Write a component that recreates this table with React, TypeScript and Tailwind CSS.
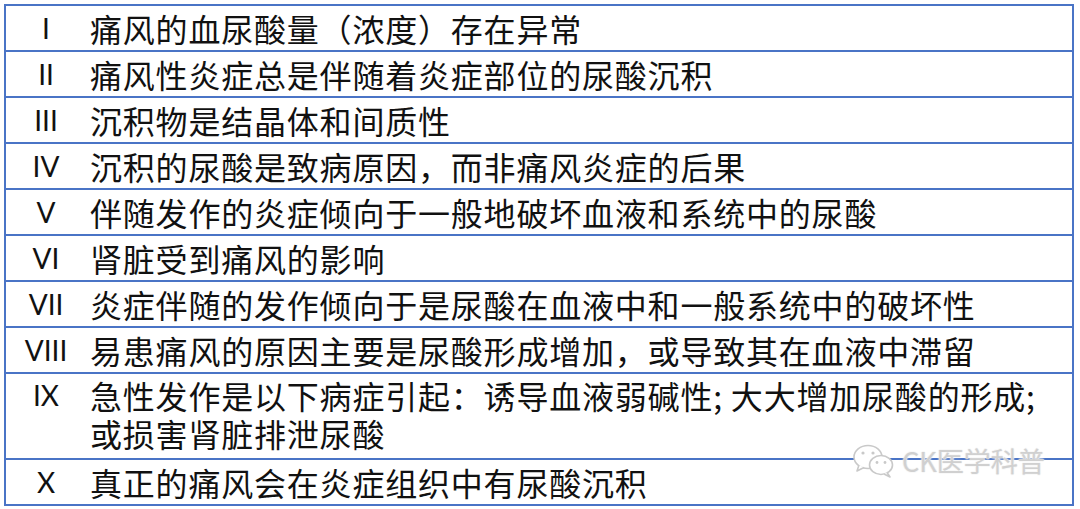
import React from "react";

const rows: { n: string; t: React.ReactNode; h: string }[] = [
  { n: "I", t: "痛风的血尿酸量（浓度）存在异常", h: "h-[44px] items-center" },
  { n: "II", t: "痛风性炎症总是伴随着炎症部位的尿酸沉积", h: "h-[46px] items-center border-t-2" },
  { n: "III", t: "沉积物是结晶体和间质性", h: "h-[46px] items-center border-t-2" },
  { n: "IV", t: "沉积的尿酸是致病原因，而非痛风炎症的后果", h: "h-[46px] items-center border-t-2" },
  { n: "V", t: "伴随发作的炎症倾向于一般地破坏血液和系统中的尿酸", h: "h-[46px] items-center border-t-2" },
  { n: "VI", t: "肾脏受到痛风的影响", h: "h-[46px] items-center border-t-2" },
  { n: "VII", t: "炎症伴随的发作倾向于是尿酸在血液中和一般系统中的破坏性", h: "h-[46px] items-center border-t-2" },
  { n: "VIII", t: "易患痛风的原因主要是尿酸形成增加，或导致其在血液中滞留", h: "h-[46px] items-center border-t-2" },
  {
    n: "IX",
    t: (
      <>
        急性发作是以下病症引起：诱导血液弱碱性; 大大增加尿酸的形成;
        <br />
        或损害肾脏排泄尿酸
      </>
    ),
    h: "h-[86px] items-start pt-[2px] border-t-2",
  },
  { n: "X", t: "真正的痛风会在炎症组织中有尿酸沉积", h: "h-[46px] items-center border-t-2" },
];

function WeChatIcon() {
  return (
    <svg width="44" height="36" viewBox="0 0 44 36" fill="none">
      <ellipse cx="16" cy="14" rx="14" ry="11.5" fill="#fff" stroke="#c9c9c9" strokeWidth="1.6" />
      <path d="M7 22 L5 28 L12 24.5" fill="#fff" stroke="#c9c9c9" strokeWidth="1.6" strokeLinejoin="round" />
      <circle cx="11" cy="10" r="1.6" fill="#c9c9c9" />
      <circle cx="21" cy="10" r="1.6" fill="#c9c9c9" />
      <ellipse cx="29" cy="22" rx="11.5" ry="9.5" fill="#fff" stroke="#c9c9c9" strokeWidth="1.6" />
      <path d="M35 29.5 L38 34 L32 31" fill="#fff" stroke="#c9c9c9" strokeWidth="1.6" strokeLinejoin="round" />
      <circle cx="25" cy="19.5" r="1.4" fill="#c9c9c9" />
      <circle cx="33" cy="19.5" r="1.4" fill="#c9c9c9" />
    </svg>
  );
}

export default function App() {
  return (
    <div className="relative h-[509px] w-[1080px] overflow-hidden bg-white p-[4px]">
      <div className="w-[1070px] border-2 border-[#4a74c6] bg-white">
        {rows.map((r) => (
          <div key={r.n} className={`flex border-[#4a74c6] ${r.h}`}>
            <div className="w-[80px] shrink-0 text-center font-['Lato','Open_Sans',sans-serif] text-[28px] leading-[38px] text-[#111]">
              {r.n}
            </div>
            <div className="whitespace-nowrap pl-[4px] font-['Noto_Sans_CJK_SC','Noto_Sans',sans-serif] text-[32px] leading-[38px] tracking-[0.8px] text-[#111]">
              {r.t}
            </div>
          </div>
        ))}
      </div>
      <div className="absolute left-[852px] top-[443px] flex items-center gap-[6px]">
        <WeChatIcon />
        <span className="font-['Noto_Sans_CJK_SC','Noto_Sans',sans-serif] text-[27px] leading-[34px] text-[#d0d0d0] [text-shadow:0_0_2px_#fff,0_0_2px_#fff,0_0_1px_#999]">
          CK医学科普
        </span>
      </div>
    </div>
  );
}
